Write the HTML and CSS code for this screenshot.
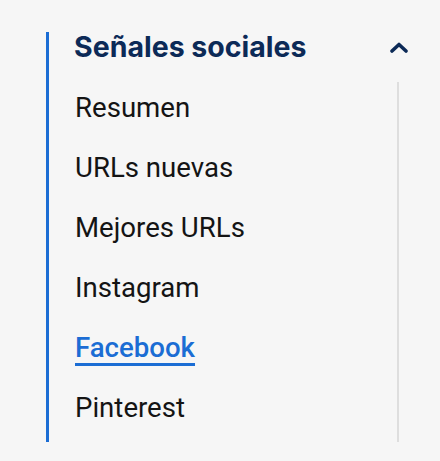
FILE: index.html
```html
<!DOCTYPE html>
<html lang="es">
<head>
<meta charset="utf-8">
<link rel="stylesheet" href="styles.css">
</head>
<body>
<nav class="sidebar">
  <div class="header">
    <span class="title">Señales sociales</span>
    <svg class="chevron" width="18" height="11" viewBox="0 0 18 11"><path d="M2 9 L9 2.5 L16 9" fill="none" stroke="#0c2a57" stroke-width="3.6" stroke-linecap="round" stroke-linejoin="round"/></svg>
  </div>
  <ul class="list">
    <li class="item">Resumen</li>
    <li class="item">URLs nuevas</li>
    <li class="item">Mejores URLs</li>
    <li class="item">Instagram</li>
    <li class="item active">Facebook</li>
    <li class="item">Pinterest</li>
  </ul>
</nav>
</body>
</html>
```
FILE: styles.css
```css
html, body {
  margin: 0;
  padding: 0;
  background: #f6f6f6;
}
.sidebar {
  margin: 32px 0 0 46px;
  width: 363px;
  border-left: 3px solid #1b6dd4;
}
.header {
  height: 50px;
  box-sizing: border-box;
  padding: 0 0 0 25px;
  display: flex;
  justify-content: space-between;
  align-items: flex-start;
}
.title {
  font-family: Inter, "Noto Sans", sans-serif;
  font-weight: 700;
  font-size: 28.5px;
  line-height: 30px;
  margin-top: 0;
  color: #0c2a57;
}
.chevron {
  margin-top: 10px;
  margin-right: 4px;
}
.list {
  list-style: none;
  margin: 0 13px 0 0;
  padding: 0;
  border-right: 2px solid #dedede;
}
.item {
  height: 60px;
  box-sizing: border-box;
  padding: 10px 0 0 26px;
  font-family: Roboto, "Liberation Sans", sans-serif;
  font-size: 27.6px;
  line-height: 32px;
  color: #141414;
}
.item.active {
  color: #1b6dd4;
  font-weight: 500;
  text-decoration: underline;
  text-decoration-thickness: 3px;
  text-underline-offset: 6px;
}
```
